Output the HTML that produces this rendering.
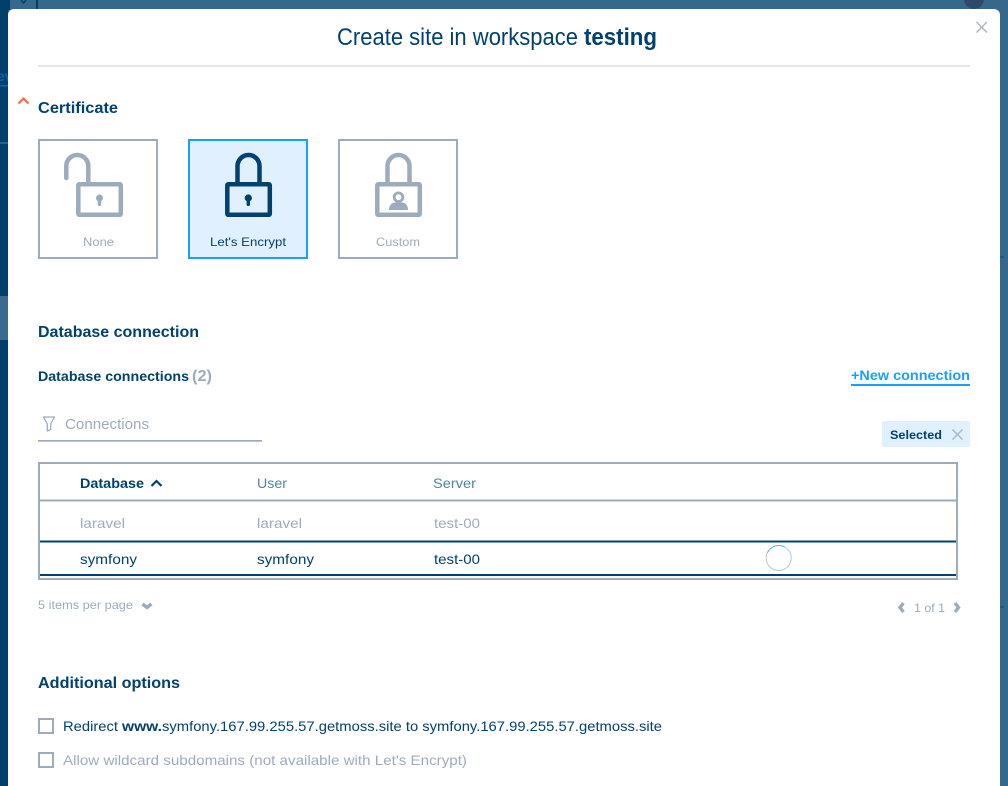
<!DOCTYPE html>
<html lang="en">
<head>
<meta charset="utf-8">
<title>Create site in workspace testing</title>
<style>
html,body{margin:0;padding:0;width:1008px;height:786px;overflow:hidden;background:#36688c}
svg{display:block}
text{font-family:"Liberation Sans",sans-serif;fill:#01416f}
.b{font-weight:700}
.g{fill:#9cacbd}
.u{fill:#4f84a8}
.gs{fill:none;stroke:#9cacbd}
.ds{fill:none;stroke:#01416f}
</style>
</head>
<body>
<svg width="1008" height="786" viewBox="0 0 1008 786" xmlns="http://www.w3.org/2000/svg">
<rect width="1008" height="786" fill="#36688c"/>
<rect x="0" y="0" width="8" height="786" fill="#01406d"/>
<rect x="0" y="0" width="10" height="10" fill="#01406d"/>
<rect x="36" y="0" width="2" height="10" fill="#01406d"/>
<path d="M21 0l2.500 3 2.500-3" fill="none" stroke="#01406d" stroke-width="1.500"/>
<rect x="0" y="296" width="8" height="44" fill="#3a6a8d"/>
<rect x="0" y="142" width="8" height="2" fill="#2a5f86"/>
<rect x="0" y="85" width="8" height="1.500" fill="#0a64a0"/>
<text x="-3" y="81" font-size="14" class="b" style="fill:#0a64a0">ev</text>
<circle cx="974" cy="-1" r="10" fill="#2d4a6c"/>
<rect x="1000" y="256" width="4" height="2" fill="#0a5f96"/>
<rect x="1000" y="606" width="4" height="2" fill="#0a5f96"/>
<rect x="8" y="9" width="992" height="790" rx="6" fill="#fff"/>

<text x="337" y="45" font-size="24" textLength="241" lengthAdjust="spacingAndGlyphs">Create site in workspace</text>
<text x="584" y="45" font-size="24" class="b" textLength="73" lengthAdjust="spacingAndGlyphs">testing</text>
<path d="M976.500 22l10.500 10.500M987 22l-10.500 10.500" fill="none" stroke="#a9b7c6" stroke-width="1.500"/>
<rect x="38" y="65" width="932" height="2" fill="#e2e7ec"/>

<path d="M18.500 103.500l5-5 5 5" fill="none" stroke="#ff6a35" stroke-width="2.200"/>
<text x="38" y="113" font-size="16" class="b" textLength="80" lengthAdjust="spacingAndGlyphs">Certificate</text>

<!-- None -->
<rect x="39" y="140" width="118" height="118" fill="#fff" stroke="#9cacbd" stroke-width="2"/>
<rect x="78.300" y="184.300" width="42.500" height="30.500" rx="1" class="gs" stroke-width="4.500"/>
<path d="M66.300 178V166a11 11 0 0 1 22 0V182" class="gs" stroke-width="4.500" stroke-linecap="round"/>
<circle cx="99.500" cy="198" r="3.500" fill="#9cacbd"/>
<rect x="97.800" y="198" width="3.400" height="8" rx="1.200" fill="#9cacbd"/>
<text x="83" y="246" font-size="12" class="g" textLength="31" lengthAdjust="spacingAndGlyphs">None</text>

<!-- Let's Encrypt -->
<rect x="189" y="140" width="118" height="118" fill="#e1f0fe" stroke="#1a9fff" stroke-width="2"/>
<rect x="227.300" y="184.300" width="42.500" height="30.500" rx="1" class="ds" stroke-width="4.500"/>
<path d="M237.500 182V166a11 11 0 0 1 22 0V182" class="ds" stroke-width="4.500"/>
<circle cx="248.300" cy="198" r="3.600" fill="#01416f"/>
<rect x="246.600" y="198" width="3.400" height="8" rx="1.200" fill="#01416f"/>
<text x="210" y="246" font-size="12" textLength="76" lengthAdjust="spacingAndGlyphs">Let's Encrypt</text>

<!-- Custom -->
<rect x="339" y="140" width="118" height="118" fill="#fff" stroke="#9cacbd" stroke-width="2"/>
<rect x="377.300" y="184.300" width="42.500" height="30.500" rx="1" class="gs" stroke-width="4.500"/>
<path d="M387.500 182V166a11 11 0 0 1 22 0V182" class="gs" stroke-width="4.500"/>
<circle cx="398.500" cy="197.200" r="4.300" class="gs" stroke-width="2.800"/>
<path d="M389 210c0-4.500 2.500-7.500 6-7.500h7c3.500 0 6 3 6 7.500z" fill="#9cacbd"/>
<text x="376" y="246" font-size="12" class="g" textLength="44" lengthAdjust="spacingAndGlyphs">Custom</text>

<text x="38" y="337" font-size="16" class="b" textLength="161" lengthAdjust="spacingAndGlyphs">Database connection</text>
<text x="38" y="381" font-size="14" class="b" textLength="151" lengthAdjust="spacingAndGlyphs">Database connections</text>
<text x="192" y="381" font-size="16" class="b g" textLength="20" lengthAdjust="spacingAndGlyphs">(2)</text>
<text x="851" y="380" font-size="14" class="b" style="fill:#1a9fff" textLength="119" lengthAdjust="spacingAndGlyphs">+New connection</text>
<rect x="851" y="384" width="119" height="2" fill="#1a9fff"/>

<path d="M43.500 417H54.500L50.700 424V429.500L47.300 431V424Z" class="gs" stroke-width="1.300" stroke-linejoin="round"/>
<text x="65" y="429" font-size="15" class="g" textLength="84" lengthAdjust="spacingAndGlyphs">Connections</text>
<rect x="38" y="440" width="224" height="1.700" fill="#9cacbd"/>

<rect x="882" y="421" width="88" height="26" rx="2" fill="#e1f0fe"/>
<text x="890" y="439" font-size="12" class="b" textLength="52" lengthAdjust="spacingAndGlyphs">Selected</text>
<path d="M952.500 429.500l10 10M962.500 429.500l-10 10" fill="none" stroke="#a9b7c6" stroke-width="1.500"/>

<!-- Table -->
<rect x="39" y="463" width="918" height="116" fill="#fff" stroke="#9cacbd" stroke-width="2"/>
<rect x="40" y="499.500" width="916" height="2" fill="#9cacbd"/>
<rect x="40" y="540.500" width="916" height="2" fill="#01416f"/>
<rect x="40" y="574" width="916" height="2" fill="#01416f"/>
<text x="80" y="488" font-size="14" class="b" textLength="64" lengthAdjust="spacingAndGlyphs">Database</text>
<path d="M151.500 486l5-5 5 5" class="ds" stroke-width="2.200"/>
<text x="257" y="488" font-size="14" class="u" textLength="30" lengthAdjust="spacingAndGlyphs">User</text>
<text x="433" y="488" font-size="14" class="u" textLength="43" lengthAdjust="spacingAndGlyphs">Server</text>
<text x="80" y="528" font-size="14" class="g" textLength="45" lengthAdjust="spacingAndGlyphs">laravel</text>
<text x="257" y="528" font-size="14" class="g" textLength="45" lengthAdjust="spacingAndGlyphs">laravel</text>
<text x="434" y="528" font-size="14" class="g" textLength="46" lengthAdjust="spacingAndGlyphs">test-00</text>
<text x="80" y="564" font-size="14" textLength="57" lengthAdjust="spacingAndGlyphs">symfony</text>
<text x="257" y="564" font-size="14" textLength="57" lengthAdjust="spacingAndGlyphs">symfony</text>
<text x="434" y="564" font-size="14" textLength="46" lengthAdjust="spacingAndGlyphs">test-00</text>
<circle cx="778.700" cy="558" r="12.500" fill="#fff" stroke="#b8c8d6" stroke-width="1"/>
<path d="M767.500 552.500A12.500 12.500 0 0 1 785 547.200" fill="none" stroke="#5fb6f5" stroke-width="1"/>

<text x="38" y="609" font-size="12" class="g" textLength="95" lengthAdjust="spacingAndGlyphs">5 items per page</text>
<path d="M142.500 604l4.500 3.500 4.500-3.500" class="gs" stroke-width="3.400"/>
<path d="M903.500 603l-3.500 4.500 3.500 4.500" class="gs" stroke-width="3.400"/>
<text x="914" y="612" font-size="12" class="g" textLength="31" lengthAdjust="spacingAndGlyphs">1 of 1</text>
<path d="M955 603l3.500 4.500-3.500 4.500" class="gs" stroke-width="3.400"/>

<text x="38" y="688" font-size="16" class="b" textLength="142" lengthAdjust="spacingAndGlyphs">Additional options</text>
<rect x="39" y="719" width="14" height="14" class="gs" stroke-width="2"/>
<text x="63" y="731" font-size="14" textLength="55" lengthAdjust="spacingAndGlyphs">Redirect</text>
<text x="122" y="731" font-size="14" class="b" textLength="40" lengthAdjust="spacingAndGlyphs">www.</text>
<text x="162" y="731" font-size="14" textLength="500" lengthAdjust="spacingAndGlyphs">symfony.167.99.255.57.getmoss.site to symfony.167.99.255.57.getmoss.site</text>
<rect x="39" y="753" width="14" height="14" class="gs" stroke-width="2"/>
<text x="63" y="765" font-size="14" class="g" textLength="404" lengthAdjust="spacingAndGlyphs">Allow wildcard subdomains (not available with Let's Encrypt)</text>
</svg>
</body>
</html>
